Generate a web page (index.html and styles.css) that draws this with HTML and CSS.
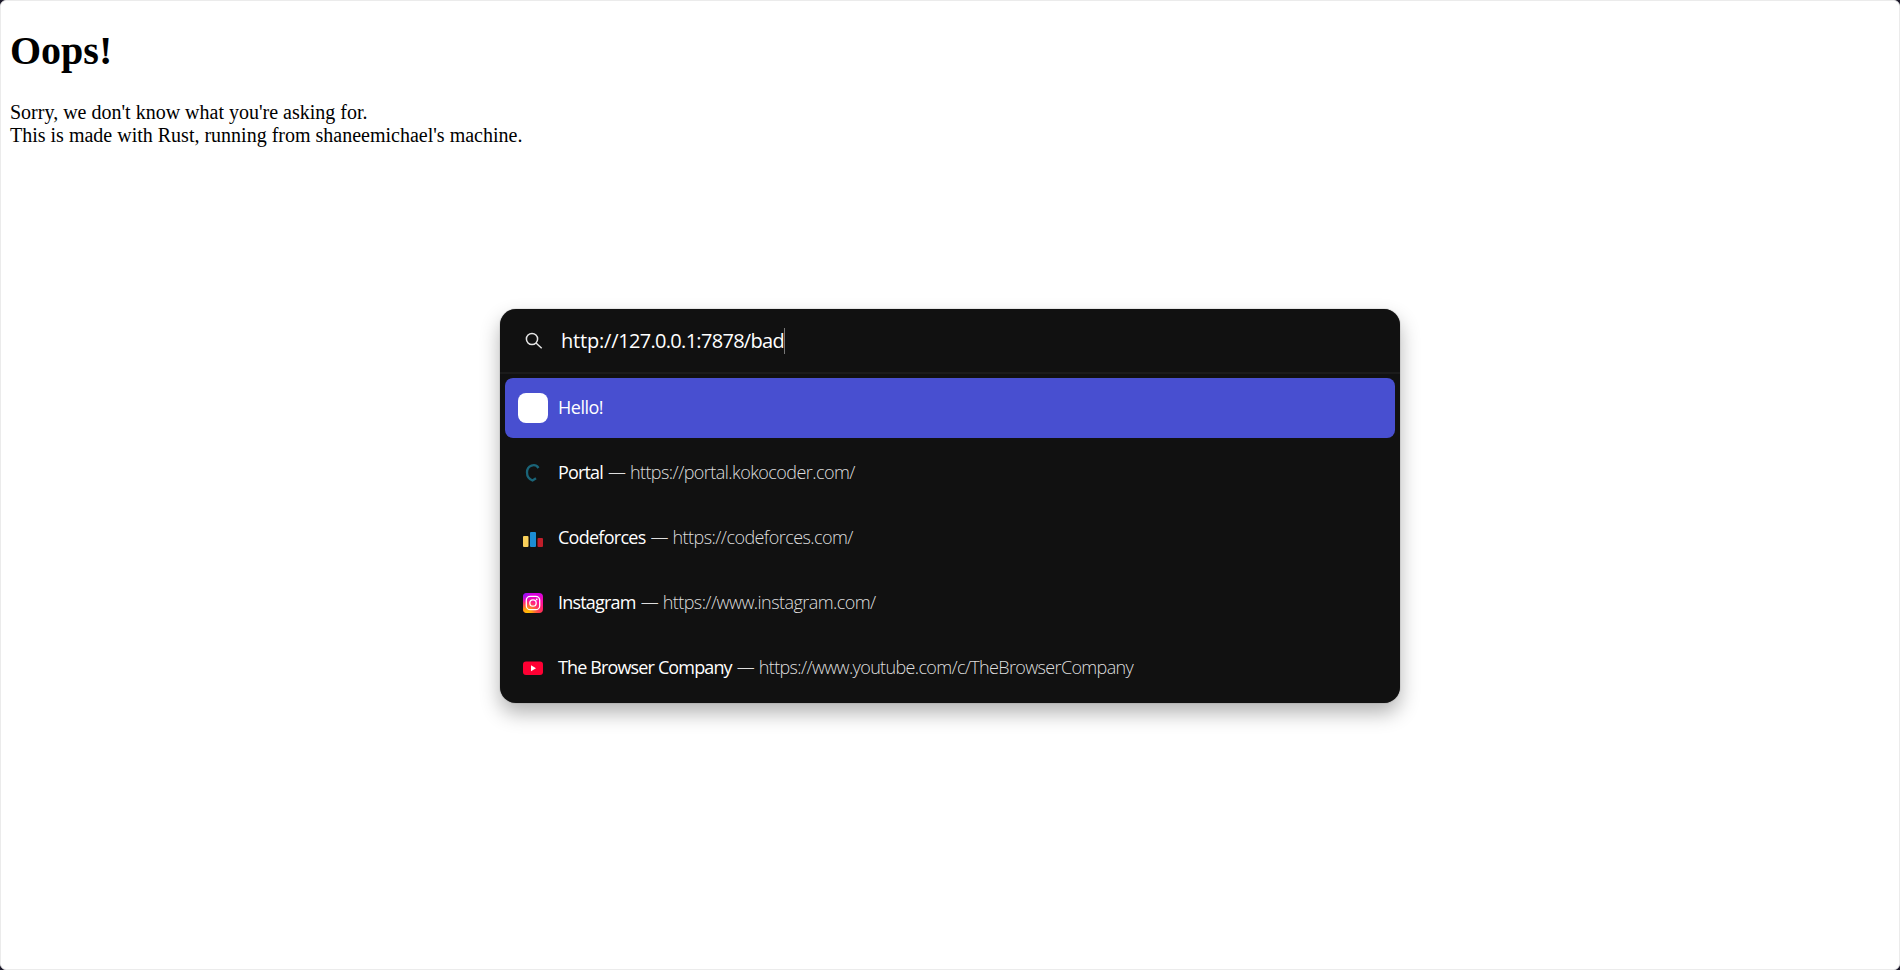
FILE: index.html
```
<!DOCTYPE html>
<html lang="en">
<head>
<meta charset="utf-8">
<title>Hello!</title>
<link rel="stylesheet" href="styles.css">
</head>
<body>
<main class="page">
  <h1 class="title">Oops!</h1>
  <p class="message">Sorry, we don't know what you're asking for.<br>This is made with Rust, running from shaneemichael's machine.</p>
</main>
<section class="palette">
  <div class="search">
    <svg class="search-icon" width="18" height="18" viewBox="0 0 18 18"><circle cx="7" cy="7" r="5.6"/><path d="M11 11l5.7 5.2"/></svg>
    <span class="query"><span class="scheme">http://</span>127.0.0.1:7878/bad</span><span class="caret"></span>
  </div>
  <ul class="results">
    <li class="row selected"><span class="icon blank"></span><span class="name hello">Hello!</span></li>
    <li class="row">
      <svg class="icon" viewBox="0 0 30 30"><path d="M20.500 10C17 4.800 9 7.500 9 14.500c0 4.500 3 7 5.500 8l3.500-2.300" fill="none" stroke="#1a6478" stroke-width="2.300"/></svg>
      <span class="name portal">Portal</span><span class="dash">—</span><span class="url portal-url">https://portal.kokocoder.com/</span>
    </li>
    <li class="row">
      <svg class="icon" viewBox="0 0 30 30"><rect x="5" y="13" width="5.500" height="11" rx="1" fill="#fad05a"/><rect x="12" y="9" width="6" height="15" rx="1" fill="#1c8dd3"/><rect x="19.500" y="15" width="5.500" height="9" rx="1" fill="#c01e2a"/></svg>
      <span class="name forces">Codeforces</span><span class="dash">—</span><span class="url forces-url">https://codeforces.com/</span>
    </li>
    <li class="row">
      <svg class="icon" viewBox="0 0 30 30">
        <defs>
          <linearGradient id="ig" x1="0" y1="0" x2="0" y2="1"><stop offset="0" stop-color="#d200e8"/><stop offset=".45" stop-color="#ff0f9d"/><stop offset="1" stop-color="#ff334c"/></linearGradient>
          <radialGradient id="gold" cx=".2" cy="1.050" r=".8"><stop offset="0" stop-color="#ffcf00"/><stop offset=".35" stop-color="#ff9b10"/><stop offset="1" stop-color="#ff3060" stop-opacity="0"/></radialGradient>
          <radialGradient id="violet" cx="0" cy="0" r=".5"><stop offset="0" stop-color="#6a1cff"/><stop offset="1" stop-color="#c000ff" stop-opacity="0"/></radialGradient>
        </defs>
        <rect x="5" y="5" width="20" height="20" rx="4" fill="url(#ig)"/><rect x="5" y="5" width="20" height="20" rx="4" fill="url(#gold)"/><rect x="5" y="5" width="20" height="20" rx="4" fill="url(#violet)"/>
        <rect x="8.300" y="8.300" width="13.400" height="13.400" rx="4" fill="none" stroke="#fff" stroke-width="1.300"/><circle cx="15" cy="15" r="3.200" fill="none" stroke="#fff" stroke-width="1.300"/><circle cx="18.700" cy="11.400" r=".9" fill="#fff"/>
      </svg>
      <span class="name insta">Instagram</span><span class="dash">—</span><span class="url insta-url">https://www.instagram.com/</span>
    </li>
    <li class="row">
      <svg class="icon" viewBox="0 0 30 30"><rect x="5" y="8.500" width="20" height="13.500" rx="3" fill="#ff0033"/><path d="M13 12.300v6l5-3z" fill="#fff"/></svg>
      <span class="name company">The Browser Company</span><span class="dash">—</span><span class="url company-url">https://www.youtube.com/c/TheBrowserCompany</span>
    </li>
  </ul>
</section>
</body>
</html>
```
FILE: styles.css
```
* { box-sizing: border-box; }
html { height: 100%; background: #1d1a2b; }
body { margin: 0; height: 100%; overflow: hidden; }
.page {
  height: 970px;
  padding: 27px 9px 0;
  background: #fff;
  border: 1px solid #ebebeb;
  border-radius: 6px;
  color: #000;
  font: 20px/23px "Liberation Serif", serif;
}
.title { margin: 0 0 27px; font-size: 40px; line-height: 46px; }
.message { margin: 0; }
.palette {
  position: absolute;
  left: 500px;
  top: 308.500px;
  width: 900px;
  height: 394.500px;
  border-radius: 16px;
  background: #111;
  color: #fff;
  font-family: "Open Sans", "Noto Sans", sans-serif;
  box-shadow: 0 0 1px #555, 0 10px 20px rgba(0, 0, 0, .3);
}
.search {
  display: flex;
  align-items: center;
  height: 65.500px;
  padding: 2px 0 0 25px;
  border-bottom: 2px solid #1b1b1b;
}
.search-icon { fill: none; stroke: #e6e6e6; stroke-width: 1.500; }
.query { margin-left: 18px; font-size: 20px; line-height: 26px; letter-spacing: -.7px; white-space: nowrap; }
.scheme { letter-spacing: -.2px; }
.caret { width: 1px; height: 26px; background: #777; }
.results {
  display: flex;
  flex-direction: column;
  gap: 5px;
  margin: 0;
  padding: 4.400px 5px;
  list-style: none;
}
.row {
  display: flex;
  align-items: center;
  height: 60px;
  padding-left: 13px;
  border-radius: 8px;
  font-size: 18px;
  line-height: 24px;
  white-space: nowrap;
}
.selected { background: #484fd0; }
.icon { flex: none; width: 30px; height: 30px; margin-right: 10px; }
.blank { border-radius: 8px; background: #fff; }
.name, .dash, .url { padding-bottom: 2px; }
.dash, .url { color: #dedede; font-weight: 300; }
.dash { margin: 0 4px 0 5px; }
.hello { letter-spacing: -.5px; }
.portal { letter-spacing: -.85px; }
.forces { letter-spacing: -.73px; }
.insta { letter-spacing: -.8px; }
.company { letter-spacing: -.86px; }
.url { letter-spacing: -.56px; }
.company-url { letter-spacing: -.65px; }
```
